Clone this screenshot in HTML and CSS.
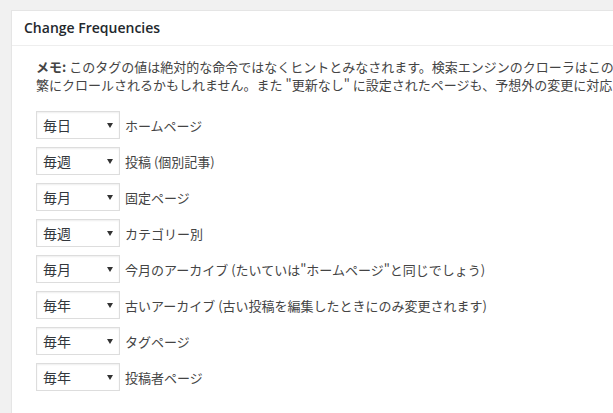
FILE: index.html
```html
<!DOCTYPE html>
<html lang="ja">
<head>
  <meta charset="UTF-8" />
  <title>Change Frequencies</title>
  <link rel="stylesheet" href="styles.css">
</head>
<body>
  <!-- Change frequency settings box -->
  <div class="postbox">
    <h2 class="hndle">Change Frequencies</h2>
    <div class="inside">
      <p class="note"><b>メモ:</b> このタグの値は絶対的な命令ではなくヒントとみなされます。検索エンジンのクローラはこの設定を考慮しますが、指定より頻<br>繁にクロールされるかもしれません。また "更新なし" に設定されたページも、予想外の変更に対応するためクロールされることがあります。</p>
      <ul class="freq-list">
        <li><span class="select-wrap"><select><option>毎日</option></select></span>ホームページ</li>
        <li><span class="select-wrap"><select><option>毎週</option></select></span>投稿 (個別記事)</li>
        <li><span class="select-wrap"><select><option>毎月</option></select></span>固定ページ</li>
        <li><span class="select-wrap"><select><option>毎週</option></select></span>カテゴリー別</li>
        <li><span class="select-wrap"><select><option>毎月</option></select></span>今月のアーカイブ (たいていは"ホームページ"と同じでしょう)</li>
        <li><span class="select-wrap"><select><option>毎年</option></select></span>古いアーカイブ (古い投稿を編集したときにのみ変更されます)</li>
        <li><span class="select-wrap"><select><option>毎年</option></select></span>タグページ</li>
        <li><span class="select-wrap"><select><option>毎年</option></select></span>投稿者ページ</li>
      </ul>
    </div>
  </div>
</body>
</html>
```

FILE: styles.css
```css
/* Admin page background */
body { margin: 0; padding: 10px 0 0 11px; background: #f1f1f1; color: #444; font-family: "Open Sans", "Noto Sans CJK JP", sans-serif; overflow: hidden; }

/* Settings box */
.postbox { width: 760px; background: #fff; border: 1px solid #e5e5e5; box-shadow: 0 1px 1px rgba(0,0,0,.04); }
.hndle { margin: 0; padding: 0 12px; height: 34px; line-height: 34px; font-size: 14px; font-weight: 600; color: #23282d; border-bottom: 1px solid #eee; }
.inside { padding: 12px 24px 20px; }

.note { margin: 0 0 17px; font-size: 13px; line-height: 18px; white-space: nowrap; font-family: "Noto Sans CJK JP", sans-serif; }
.note b { font-weight: 700; }

/* Frequency rows */
.freq-list { list-style: none; margin: 0; padding: 0; }
.freq-list li { display: flex; align-items: center; gap: 5px; height: 28px; margin-bottom: 8px; font-size: 13px; font-family: "Noto Sans CJK JP", sans-serif; }
.select-wrap { position: relative; display: inline-block; height: 28px; }
.select-wrap::after { content: ""; position: absolute; right: 7px; top: 12px; border-left: 3px solid transparent; border-right: 3px solid transparent; border-top: 5px solid #333; pointer-events: none; }
.select-wrap select { -webkit-appearance: none; appearance: none; display: block; width: 84px; height: 28px; margin: 0; padding: 0 6px; border: 1px solid #ddd; border-radius: 0; background: #fff; box-shadow: inset 0 1px 2px rgba(0,0,0,.07); color: #32373c; font-size: 14px; font-family: "Noto Sans CJK JP", sans-serif; }
```
